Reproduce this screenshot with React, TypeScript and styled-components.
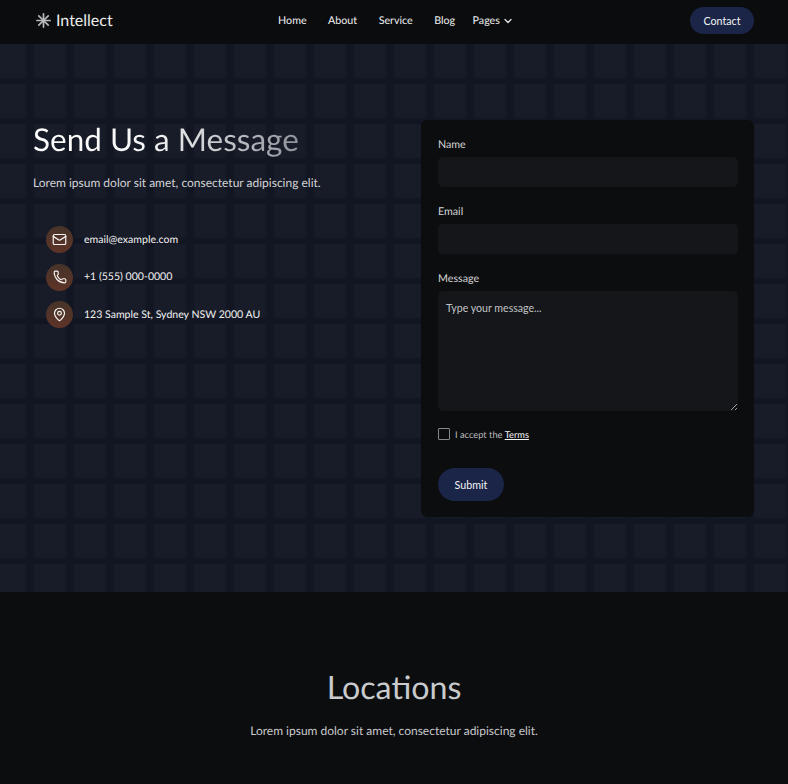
import React from "react";
import styled, { createGlobalStyle } from "styled-components";
import { Mail, Phone, MapPin, ChevronDown } from "lucide-react";

const Global = createGlobalStyle`
  html, body { margin: 0; padding: 0; background: #0c0d0f; }
  body { font-family: Lato, "Noto Sans", sans-serif; color: #fff; text-rendering: geometricPrecision; }
  * { box-sizing: border-box; }
`;

const Page = styled.div`
  width: 788px;
  height: 784px;
  overflow: hidden;
  background: #0c0d0f;
`;

const Nav = styled.header`
  height: 44px;
  padding: 0 34px 3px 36px;
  display: grid;
  grid-template-columns: 1fr auto 1fr;
  align-items: center;
  background: #0b0c0e;
`;

const Brand = styled.div`
  display: flex;
  align-items: center;
  gap: 5px;
  font-size: 16px;
  color: #eceded;
`;

const NavLinks = styled.nav`
  display: flex;
  align-items: center;
  gap: 21.5px;
  margin-left: 2px;
  font-size: 10.7px;
  color: #f0f0f1;
`;

const NavLink = styled.a`
  display: flex;
  align-items: center;
  gap: 2px;
`;

const PagesLink = styled(NavLink)`
  margin-left: -4px;
`;

const NavEnd = styled.div`
  display: flex;
  justify-content: flex-end;
`;

const Pill = styled.button<{ $w: number; $h: number }>`
  width: ${(p) => p.$w}px;
  height: ${(p) => p.$h}px;
  border: 0;
  border-radius: 999px;
  background: #1a2547;
  color: #f2f3f5;
  font-family: inherit;
  font-size: 10.7px;
  font-weight: 400;
  padding: 0;
`;

const Hero = styled.section`
  height: 548px;
  padding: 76px 34px 0 33px;
  display: flex;
  justify-content: space-between;
  align-items: flex-start;
  background-color: #181c28;
  background-image:
    linear-gradient(90deg, transparent 0 25px, #121622 27px 33px, transparent 35px),
    linear-gradient(180deg, transparent 0 33px, #121622 35px 40px, transparent 40px);
  background-size: 40px 40px;
`;

const Intro = styled.div`
  width: 340px;
`;

const Title = styled.h1`
  margin: 0;
  font-size: 31.5px;
  line-height: 38px;
  font-weight: 400;
  width: fit-content;
  background: linear-gradient(90deg, #ffffff 0%, #f4f4f5 45%, #8f939b 100%);
  -webkit-background-clip: text;
  background-clip: text;
  color: transparent;
`;

const Lead = styled.p`
  margin: 15px 0 0;
  font-size: 12px;
  line-height: 20px;
  color: #d2d3d6;
`;

const ContactList = styled.ul`
  list-style: none;
  margin: 33px 0 0;
  padding: 0 0 0 13px;
  display: flex;
  flex-direction: column;
  gap: 10.5px;
`;

const ContactItem = styled.li`
  display: flex;
  align-items: center;
  gap: 11px;
  font-size: 10.55px;
  color: #f1f1f2;
`;

const IconDisc = styled.span`
  width: 27px;
  height: 27px;
  border-radius: 50%;
  display: flex;
  align-items: center;
  justify-content: center;
  background: linear-gradient(180deg, #463429, #5f3327);
  color: #f7f4f2;
`;

const Card = styled.form`
  width: 333px;
  height: 397px;
  padding: 17px 16px 0 17px;
  border-radius: 6px;
  background: #0c0d0f;
`;

const Label = styled.label`
  display: block;
  height: 20px;
  font-size: 10.7px;
  line-height: 16px;
  color: #d4d5d7;
`;

const Input = styled.input`
  display: block;
  width: 100%;
  height: 30px;
  margin-bottom: 17px;
  border: 0;
  border-radius: 5px;
  background: #14161a;
  outline: 0;
`;

const TextArea = styled.textarea`
  display: block;
  width: 100%;
  height: 120px;
  padding: 10px 8px;
  border: 0;
  border-radius: 5px;
  background: #14161a;
  color: #fff;
  font-family: inherit;
  font-size: 10.6px;
  line-height: 14px;
  outline: 0;
  &::placeholder { color: #c2c3c6; opacity: 1; }
`;

const TermsRow = styled.div`
  margin: 17px 0 28px;
  display: flex;
  align-items: center;
  gap: 5px;
  font-size: 9.3px;
  color: #b9babd;
`;

const Box = styled.span`
  width: 12px;
  height: 12px;
  border: 1px solid #85878b;
  border-radius: 1px;
`;

const TermsLink = styled.a`
  color: #f4f4f5;
  text-decoration: underline;
`;

const Locations = styled.section`
  padding-top: 75px;
  text-align: center;
`;

const LocTitle = styled.h2`
  margin: 0;
  font-size: 32.2px;
  line-height: 40px;
  font-weight: 400;
  color: #c9cacc;
`;

const LocLead = styled.p`
  margin: 14px 0 0;
  font-size: 12px;
  line-height: 20px;
  color: #c8c9cb;
`;

const Spark = () => (
  <svg width="15" height="15" viewBox="0 0 16 16" fill="none" stroke="#b9babc" strokeLinecap="round">
    <g strokeWidth="1.8">
      <path d="M8 1v14" />
      <path d="M1 8h14" />
    </g>
    <g strokeWidth="1.7">
      <path d="M3 3l10 10" />
      <path d="M13 3L3 13" />
    </g>
  </svg>
);

export default function App() {
  return (
    <Page>
      <Global />
      <Nav>
        <Brand>
          <Spark />
          Intellect
        </Brand>
        <NavLinks>
          <NavLink>Home</NavLink>
          <NavLink>About</NavLink>
          <NavLink>Service</NavLink>
          <NavLink>Blog</NavLink>
          <PagesLink>
            Pages <ChevronDown size={12} strokeWidth={2.4} />
          </PagesLink>
        </NavLinks>
        <NavEnd>
          <Pill $w={64} $h={27}>Contact</Pill>
        </NavEnd>
      </Nav>
      <Hero>
        <Intro>
          <Title>Send Us a Message</Title>
          <Lead>Lorem ipsum dolor sit amet, consectetur adipiscing elit.</Lead>
          <ContactList>
            <ContactItem>
              <IconDisc><Mail size={15} strokeWidth={1.9} /></IconDisc>
              email@example.com
            </ContactItem>
            <ContactItem>
              <IconDisc><Phone size={14} strokeWidth={1.9} /></IconDisc>
              +1 (555) 000-0000
            </ContactItem>
            <ContactItem>
              <IconDisc><MapPin size={15} strokeWidth={1.9} /></IconDisc>
              123 Sample St, Sydney NSW 2000 AU
            </ContactItem>
          </ContactList>
        </Intro>
        <Card>
          <Label>Name</Label>
          <Input />
          <Label>Email</Label>
          <Input />
          <Label>Message</Label>
          <TextArea placeholder="Type your message..." />
          <TermsRow>
            <Box />
            <span>I accept the <TermsLink>Terms</TermsLink></span>
          </TermsRow>
          <Pill type="button" $w={66} $h={33}>Submit</Pill>
        </Card>
      </Hero>
      <Locations>
        <LocTitle>Locations</LocTitle>
        <LocLead>Lorem ipsum dolor sit amet, consectetur adipiscing elit.</LocLead>
      </Locations>
    </Page>
  );
}
